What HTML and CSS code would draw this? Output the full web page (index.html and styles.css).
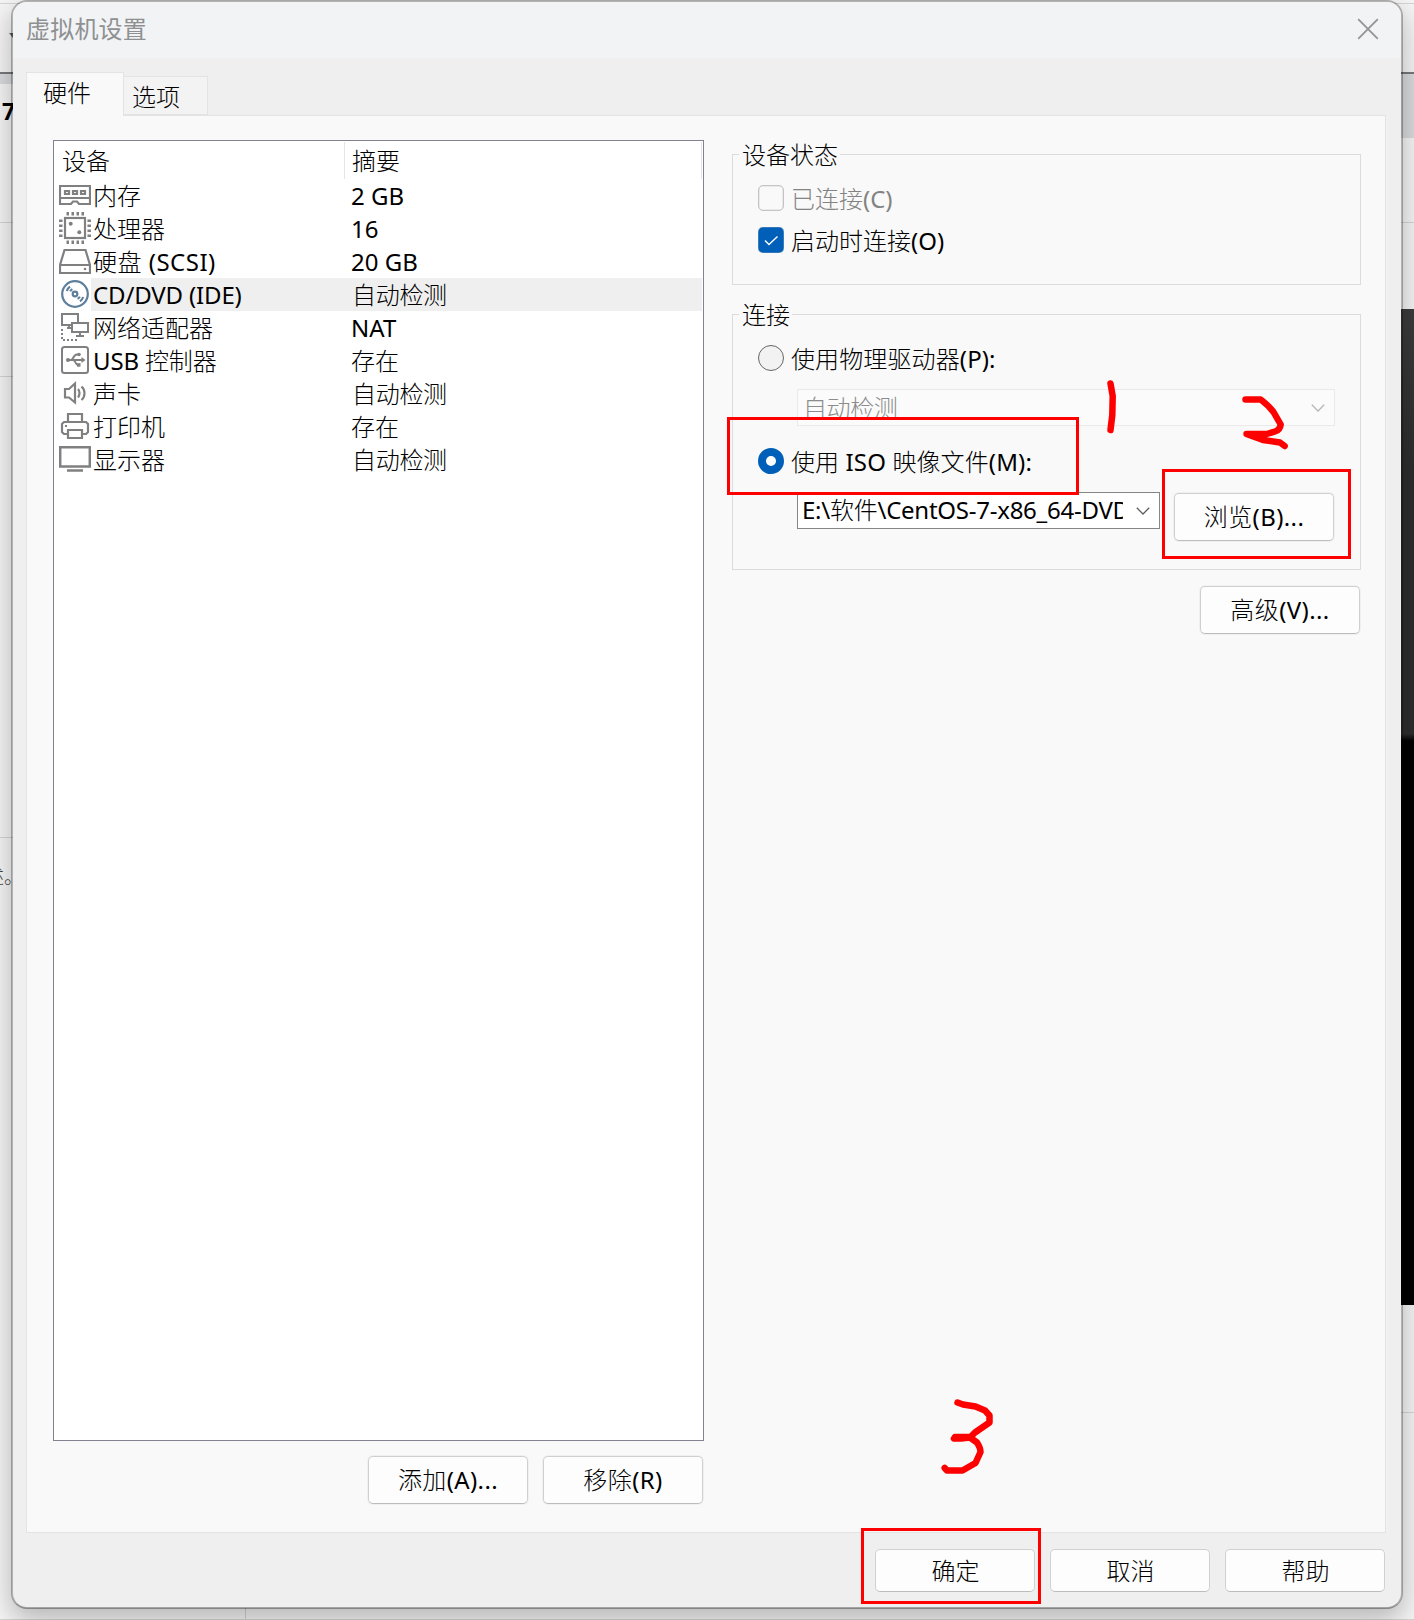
FILE: index.html
```html
<!DOCTYPE html>
<html lang="zh-CN">
<head>
<meta charset="utf-8">
<title>虚拟机设置</title>
<link rel="stylesheet" href="styles.css">
</head>
<body>
<div class="backdrop">
  <div class="strip strip-left">
    <i class="bar bar-top"></i>
    <i class="bar bar-tabs"></i>
    <i class="bar bar-a"></i>
    <i class="bar bar-b"></i>
    <i class="bar bar-c"></i>
    <svg class="caret" width="8" height="5"><path d="M0 0H8L4 5Z" fill="#666"/></svg>
    <b class="behind-title">7</b>
    <span class="behind-text">述。</span>
  </div>
  <div class="strip strip-right">
    <i class="bar bar-top"></i>
    <i class="bar bar-tabs tall"></i>
    <i class="bar bar-a"></i>
    <i class="screen"></i>
    <i class="bar bar-d"></i>
  </div>
  <div class="strip-bottom"></div>
</div>

<main class="window">
  <header class="titlebar">
    <span class="title">虚拟机设置</span>
    <svg class="close" width="22" height="22" viewBox="0 0 22 22"><path d="M1.2 1.2 20.8 20.8M20.8 1.2 1.2 20.8"/></svg>
  </header>

  <nav class="tabs">
    <span class="tab active">硬件</span>
    <span class="tab">选项</span>
  </nav>

  <section class="panel">
    <div class="left">
      <div class="list">
        <div class="row head"><span class="name">设备</span><span class="summary">摘要</span></div>
        <div class="row">
          <svg class="icon" viewBox="0 0 32 32"><g fill="none" stroke="#808080" stroke-width="2.2"><path d="M1 7H31V25H20L18 22.500H14L12 25H1ZM1 19H31"/><path d="M6 12H10V15H6ZM14 12H18V15H14ZM22 12H26V15H22Z"/></g></svg>
          <span class="name">内存</span><span class="summary">2 GB</span>
        </div>
        <div class="row">
          <svg class="icon" viewBox="0 0 32 32"><g fill="none" stroke="#808080" stroke-width="2.2"><rect x="6" y="6" width="20" height="20"/><path stroke-width="3.500" stroke-dasharray="2.500 2.500" d="M7.500 1.800H25M7.500 30.200H25M1.800 7.500V25M30.200 7.500V25"/></g><g fill="#808080"><circle cx="11.700" cy="11.700" r="2"/><circle cx="20.300" cy="20.300" r="2"/></g></svg>
          <span class="name">处理器</span><span class="summary">16</span>
        </div>
        <div class="row">
          <svg class="icon" viewBox="0 0 32 32"><path fill="none" stroke="#808080" stroke-width="2.2" d="M5.500 5H26.500L31 20V28H1V20ZM1 20H31"/><circle cx="26" cy="24" r="1.300" fill="#808080"/></svg>
          <span class="name wide">硬盘 (SCSI)</span><span class="summary">20 GB</span>
        </div>
        <div class="row selected">
          <svg class="icon" viewBox="0 0 32 32"><g fill="none" stroke="#5e7f9b" stroke-width="2.2"><circle cx="16" cy="16" r="12.800"/><circle cx="16" cy="16" r="2.300"/><path d="M7.800 13C8.500 11 9.500 9.600 11 8.600M11.200 13.400C11.700 12.300 12.500 11.600 13.400 11.100M24.200 19C23.500 21 22.500 22.400 21 23.400M20.800 18.600C20.300 19.700 19.500 20.400 18.600 20.900"/></g></svg>
          <span class="name tight">CD/DVD (IDE)</span><span class="summary sp">自动检测</span>
        </div>
        <div class="row">
          <svg class="icon" viewBox="0 0 32 32"><g fill="none" stroke="#808080" stroke-width="2"><path d="M12 14H3V3H19V11M10 14V17M8 17H12M13 12H29V21H13ZM21 21V25M17 25H25"/><path stroke-dasharray="2 2" d="M3 18V29H19"/></g></svg>
          <span class="name">网络适配器</span><span class="summary">NAT</span>
        </div>
        <div class="row">
          <svg class="icon" viewBox="0 0 32 32"><g fill="none" stroke="#808080" stroke-width="2"><rect x="3" y="3" width="26" height="26" rx="2.500"/><path d="M8 16H25M12 16C14.500 16 14 10.500 18 10.500H19M14 16C17 16 16 21 19 21"/></g><g fill="#808080"><circle cx="9" cy="16" r="2"/><circle cx="20" cy="10.500" r="1.800"/><rect x="18" y="19.200" width="3.500" height="3.500"/><path d="M22.500 13V19L26.500 16Z"/></g></svg>
          <span class="name tight">USB 控制器</span><span class="summary">存在</span>
        </div>
        <div class="row">
          <svg class="icon" viewBox="0 0 32 32"><g fill="none" stroke="#808080" stroke-width="2.2"><path d="M6 12H10L16 6.500V25.500L10 20.500H6ZM19 12C21 14 21 18 19 20.500M22.500 9.500C26.500 13 26.500 19.500 22.500 23"/></g></svg>
          <span class="name">声卡</span><span class="summary sp">自动检测</span>
        </div>
        <div class="row">
          <svg class="icon" viewBox="0 0 32 32"><g fill="none" stroke="#808080" stroke-width="2.2"><path d="M9 12V4H23V12M9 24H5L3 22V14L5 12H27L29 14V22L27 24H23M9 20H23V28H9Z"/></g><path fill="#808080" d="M6 15H8V17H6Z"/></svg>
          <span class="name">打印机</span><span class="summary">存在</span>
        </div>
        <div class="row">
          <svg class="icon" viewBox="0 0 32 32"><path fill="none" stroke="#808080" stroke-width="2.500" d="M1.200 4.200H30.800V23.500H1.200ZM8 27.500H24"/></svg>
          <span class="name">显示器</span><span class="summary sp">自动检测</span>
        </div>
      </div>
      <div class="list-actions">
        <span class="button">添加(A)...</span>
        <span class="button">移除(R)</span>
      </div>
    </div>

    <div class="right">
      <div class="group status">
        <span class="legend">设备状态</span>
        <div class="option disabled"><i class="check"></i><span>已连接(C)</span></div>
        <div class="option"><i class="check on"><svg width="26" height="26"><path d="M7 13.500 11 17.500 19.500 9.500"/></svg></i><span>启动时连接(O)</span></div>
      </div>
      <div class="group connection">
        <span class="legend">连接</span>
        <div class="option"><i class="radio"></i><span>使用物理驱动器(P):</span></div>
        <div class="combo muted"><span class="value">自动检测</span><svg class="chevron" width="14" height="8"><path d="M.8.8 7 7 13.200.8"/></svg></div>
        <div class="option iso"><i class="radio on"></i><span>使用 ISO 映像文件(M):</span></div>
        <div class="file-row">
          <div class="combo"><span class="value path">E:\软件\CentOS-7-x86_64-DVD</span><svg class="chevron" width="14" height="8"><path d="M.8.8 7 7 13.200.8"/></svg></div>
          <span class="button">浏览(B)...</span>
        </div>
      </div>
      <span class="button advanced">高级(V)...</span>
    </div>
  </section>

  <footer class="footer">
    <span class="button">确定</span>
    <span class="button">取消</span>
    <span class="button">帮助</span>
  </footer>
</main>

<svg class="ink" width="1414" height="1620" viewBox="0 0 1414 1620">
  <g stroke-width="3">
    <rect x="728.500" y="418.500" width="349" height="75"/>
    <rect x="1163.500" y="470.500" width="186" height="87"/>
    <rect x="862.500" y="1529.500" width="177" height="73"/>
  </g>
  <g stroke-width="6.500" stroke-linecap="round" stroke-linejoin="round">
    <path d="M1110.500 383.500 1112.700 396 1112.300 415 1110.500 430"/>
    <path d="M1245.500 399.500H1260.700Q1268 405 1273.500 412L1280.700 424.500Q1280 430 1275 431.500L1266.700 434H1246.500L1263 440 1280 442.500 1284.700 446"/>
    <path d="M957.500 1402.500 963 1404.500 975.500 1406.500 985 1410.500 989.500 1415.500V1422.500L975 1432.500 970.500 1437H955L954 1438.500H961L970 1437.500 977 1442.500Q980.500 1448 980.500 1452L975.500 1463 962.500 1470.500H947L944.700 1468"/>
  </g>
</svg>
</body>
</html>
```
FILE: styles.css
```css
* { box-sizing: border-box; }

body {
  margin: 0;
  width: 1414px;
  height: 1620px;
  overflow: hidden;
  position: relative;
  background: #f4f4f4;
  color: #000;
  font: 400 24px/33px "Noto Sans", "Noto Sans CJK SC Light", "Noto Sans CJK SC", sans-serif;
}

i { font-style: normal; }

/* whatever shows around the dialog */
.backdrop { position: absolute; inset: 0; overflow: hidden; }
.strip { position: absolute; top: 0; bottom: 0; overflow: hidden; }
.strip-left { left: 0; width: 20px; }
.strip-right { right: 0; width: 20px; }
.bar { position: absolute; left: 0; right: 0; height: 1px; background: #d4d4d4; }
.bar-top { top: 3px; }
.bar-tabs { top: 72px; height: 12px; background: #d9dadd; border-top: 2px solid #77787a; }
.bar-tabs.tall { height: 66px; }
.bar-a { top: 222px; }
.bar-b { top: 376px; }
.bar-c { top: 837px; }
.bar-d { top: 1412px; }
.screen {
  position: absolute;
  top: 309px;
  left: 0;
  right: 0;
  height: 996px;
  background: linear-gradient(#3c3c3c, #2d2d2d 160px, #2d2d2d 425px, #000 432px);
}
.caret { position: absolute; left: 9px; top: 33px; }
.behind-title { position: absolute; left: 2px; top: 95px; font-size: 23px; }
.behind-text { position: absolute; left: -15px; top: 861px; font-size: 19px; color: #444; white-space: nowrap; }
.strip-bottom {
  position: absolute;
  left: 0;
  right: 0;
  bottom: 0;
  height: 12px;
  border-bottom: 1px solid #d4d4d4;
  background: linear-gradient(#d0d0d0, #d0d0d0) 245px 0 / 1px 11px no-repeat;
}

/* dialog frame */
.window {
  position: relative;
  display: flex;
  flex-direction: column;
  width: 1392px;
  height: 1609px;
  margin-left: 11px;
  border: 2px solid rgba(0, 0, 0, .27);
  border-bottom-color: rgba(0, 0, 0, .33);
  border-radius: 16px;
  background: #efefef;
  background-clip: padding-box;
  box-shadow: 0 10px 26px rgba(0, 0, 0, .26);
}
.titlebar {
  display: flex;
  justify-content: space-between;
  align-items: center;
  height: 56px;
  padding: 0 22px 2px 13px;
  border-radius: 14px 14px 0 0;
  background: #f1f3f5;
}
.title { margin-top: -4px; color: #8f9091; font-family: "Noto Sans CJK SC", sans-serif; letter-spacing: .2px; }
.close { fill: none; stroke: #939495; stroke-width: 1.8; }

.tabs {
  display: flex;
  align-items: flex-end;
  height: 57px;
  margin-left: 13px;
}
.tab {
  height: 39px;
  width: 84px;
  padding: 3px 0 0 8px;
  border: 1px solid #e3e3e3;
  border-left: 0;
  background: #f3f3f3;
}
.tab.active {
  position: relative;
  z-index: 1;
  height: 44px;
  width: 98px;
  margin-bottom: -1px;
  padding: 3px 0 0 16px;
  border-left: 1px solid #e5e5e5;
  border-bottom: 0;
  background: #f9f9f9;
}

.panel {
  display: flex;
  gap: 28px;
  width: 1360px;
  height: 1418px;
  margin-left: 13px;
  padding: 24px 0 0 26px;
  border: 1px solid #e3e3e3;
  background: #f9f9f9;
  box-shadow: 2px 0 0 #f1f1f1;
}

/* device list */
.left { width: 651px; }
.list {
  height: 1301px;
  padding: 1px 1px 0 5px;
  border: 1px solid #828290;
  background: #fff;
}
.row { display: flex; height: 33px; }
.icon { flex: none; width: 32px; height: 32px; }
.name { width: 253px; padding-left: 2px; white-space: pre; }
.name.wide { letter-spacing: .5px; }
.name.tight { letter-spacing: -.15px; }
.summary { flex: 1; padding-left: 7px; }
.summary.sp { padding-left: 8px; letter-spacing: -.3px; }
.row.selected .name, .row.selected .summary { background: #efefef; }
.head { height: 37px; line-height: 37px; }
.head .name { width: 286px; padding-left: 3px; border-right: 1px solid #e5e5e5; }
.head .summary { padding-left: 7px; border-right: 1px solid #e5e5e5; }

.button {
  display: flex;
  justify-content: center;
  align-items: center;
  width: 160px;
  height: 48px;
  padding-bottom: 1px;
  border: 1px solid #d0d0d0;
  border-bottom-color: #bcbcbc;
  border-radius: 5px;
  background: #fdfdfd;
  box-shadow: 0 0 0 1px #f0f0f0;
  letter-spacing: .4px;
}
.list-actions {
  display: flex;
  justify-content: flex-end;
  gap: 15px;
  margin-top: 15px;
  padding-right: 1px;
}

/* option groups */
.right { width: 629px; padding-top: 14px; }
.group { position: relative; border: 1px solid #dcdcdc; }
.status { height: 131px; padding: 25px 0 0 25px; }
.connection { height: 256px; margin-top: 29px; padding: 25px 0 0 25px; }
.legend {
  position: absolute;
  left: 6px;
  top: -17px;
  padding: 0 2px 0 3px;
  background: #f9f9f9;
}
.option { display: flex; align-items: center; gap: 7px; height: 36px; }
.status .option { height: 42px; }
.status .option:nth-child(2) { margin-top: -3px; }
.option.disabled { color: #838383; }
.iso, .connection .option { letter-spacing: .12px; }
.check, .radio { flex: none; width: 26px; height: 26px; }
.check { border: 1px solid #c4c4c4; border-radius: 5px; box-shadow: inset 0 0 0 .3px #c4c4c4; }
.check.on { border: 0; background: #005fb8; }
.check svg { display: block; fill: none; stroke: #fff; stroke-width: 1.4; }
.radio { border: 1.5px solid #666; border-radius: 50%; background: #f2f2f2; }
.radio.on { border: 8px solid #005fb8; background: #fff; }
.combo {
  display: flex;
  justify-content: space-between;
  align-items: center;
  width: 363px;
  height: 37px;
  padding: 0 9px 0 4px;
  border: 1px solid #868686;
  background: #fff;
}
.combo.muted {
  width: 538px;
  margin: 13px 0 0 39px;
  padding-left: 5px;
  border-color: #eaeaea;
  background: #fbfbfb;
  color: #8c8c8c;
  letter-spacing: -.4px;
}
.chevron { fill: none; stroke: #5c5c5c; stroke-width: 1.3; }
.muted .chevron { stroke: #b5b5b5; }
.value { white-space: pre; overflow: hidden; line-height: 35px; }
.path { width: 321px; letter-spacing: -.25px; }
.iso { margin-top: 17px; }
.file-row { display: flex; gap: 14px; margin: 13px 0 0 39px; }
.file-row .combo .value { line-height: 33px; padding-bottom: 2px; }
.file-row .button { flex: none; margin-top: 1px; }
.advanced { margin: 16px 1px 0 auto; }

.footer {
  display: flex;
  justify-content: flex-end;
  gap: 15px;
  margin-top: 16px;
  padding-right: 16px;
}
.footer .button { height: 43px; padding-bottom: 0; letter-spacing: 0; padding-left: 1px; }

/* hand-drawn annotations */
.ink { position: absolute; left: 0; top: 0; fill: none; stroke: #f00; }
```
